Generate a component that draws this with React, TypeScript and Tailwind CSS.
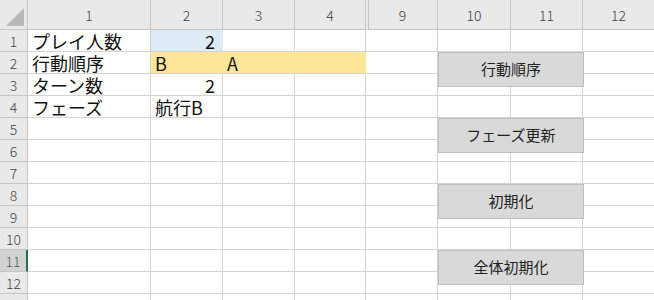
const colWidths = [123, 72, 72, 71, 72, 73, 72, 72];
const colLabels = ["1", "2", "3", "4", "9", "10", "11", "12"];

type Cell = { text?: string; align?: "left" | "right"; fill?: string };

const data: Record<string, Cell> = {
  "1-0": { text: "プレイ人数" },
  "1-1": { text: "2", align: "right", fill: "bg-[#ddebf7]" },
  "2-0": { text: "行動順序" },
  "2-1": { text: "B", fill: "bg-[#ffe699]" },
  "2-2": { text: "A", fill: "bg-[#ffe699]" },
  "2-3": { fill: "bg-[#ffe699]" },
  "3-0": { text: "ターン数" },
  "3-1": { text: "2", align: "right" },
  "4-0": { text: "フェーズ" },
  "4-1": { text: "航行B" },
};

const buttons = [
  { label: "行動順序", top: "top-[52px]" },
  { label: "フェーズ更新", top: "top-[118px]" },
  { label: "初期化", top: "top-[184px]" },
  { label: "全体初期化", top: "top-[250px]" },
];

const rows = Array.from({ length: 13 }, (_, i) => i + 1);

export default function App() {
  return (
    <div className="relative h-[300px] w-[654px] overflow-hidden bg-white font-['Noto_Sans_CJK_JP',sans-serif]">
      <div
        className="grid"
        style={{ gridTemplateColumns: `28px ${colWidths.map((w) => w + "px").join(" ")}` }}
      >
        {/* header row */}
        <div className="relative h-[30px] border-b border-r border-[#c6c6c6] bg-[#e9e9e9]">
          <svg className="absolute bottom-[3px] right-[3px]" width="18" height="18" viewBox="0 0 18 18">
            <polygon points="18,0 18,18 0,18" fill="#b9b9b9" />
          </svg>
        </div>
        {colLabels.map((c, i) => (
          <div
            key={c}
            className={`flex h-[30px] items-center justify-center border-b border-r border-[#c6c6c6] bg-[#e9e9e9] pt-[1px] text-[14px] font-light text-[#444] ${
              i === 4 ? "border-l-2 border-l-[#e9e9e9] shadow-[inset_1px_0_0_#c6c6c6]" : ""
            }`}
          >
            {c}
          </div>
        ))}

        {rows.map((r) => (
          <Row key={r} r={r} />
        ))}
      </div>

      {buttons.map((b) => (
        <div
          key={b.label}
          className={`absolute left-[438px] ${b.top} flex h-[35px] w-[146px] items-center justify-center border border-[#bfbfbf] bg-[#d9d9d9] text-[15px] text-[#222]`}
        >
          {b.label}
        </div>
      ))}
    </div>
  );
}

function Row({ r }: { r: number }) {
  const selected = r === 11;
  return (
    <>
      <div
        className={`flex h-[22px] items-center justify-center border-b border-r pt-[1px] text-[14px] font-light ${
          selected
            ? "border-b-[#c6c6c6] border-r-2 border-r-[#217346] bg-[#d2d2d2] text-[#3d6b4f]"
            : "border-[#c6c6c6] bg-[#e9e9e9] text-[#444]"
        }`}
      >
        {r}
      </div>
      {colWidths.map((_, c) => {
        const cell = data[`${r}-${c}`];
        const fill = cell?.fill;
        return (
          <div
            key={c}
            className={`flex h-[22px] items-center overflow-visible whitespace-nowrap border-b border-r px-[4px] text-[18px] leading-none text-[#111] ${
              fill ? `${fill} border-b-[#d4d4d4] border-r-transparent` : "border-[#d4d4d4]"
            } ${cell?.align === "right" ? "justify-end pr-[7px]" : ""} ${c === 0 ? "pl-[4px]" : ""}`}
          >
            {cell?.text}
          </div>
        );
      })}
    </>
  );
}
